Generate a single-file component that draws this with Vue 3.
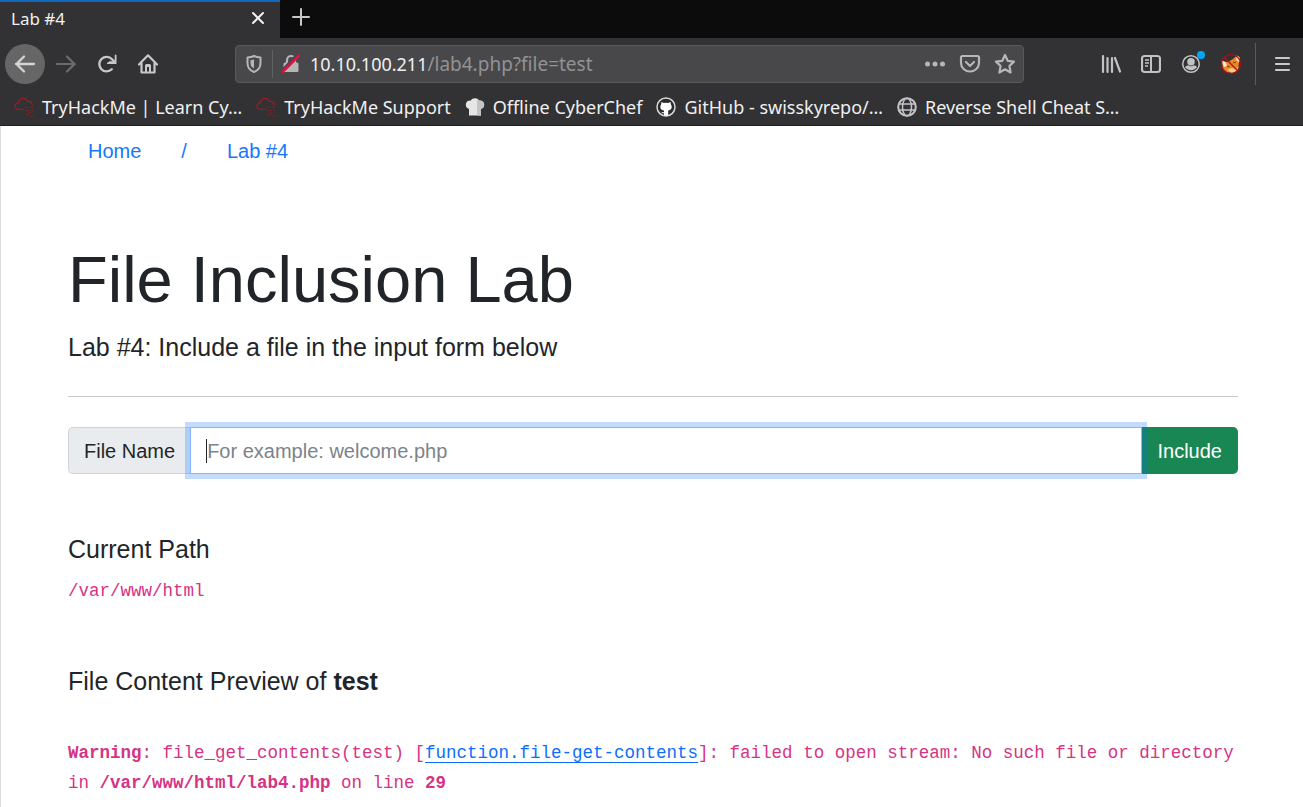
<script setup>
import { ref } from 'vue'

const fileName = ref('')
const address = ref('/lab4.php?file=test')

const bookmarks = [
  { icon: 'cloud', text: 'TryHackMe | Learn Cy…' },
  { icon: 'cloud', text: 'TryHackMe Support' },
  { icon: 'chef', text: 'Offline CyberChef' },
  { icon: 'github', text: 'GitHub - swisskyrepo/…' },
  { icon: 'globe', text: 'Reverse Shell Cheat S…' },
]
</script>

<template>
  <div class="window">
    <header class="chrome">
      <div class="tabs">
        <div class="tab">
          <span>Lab #4</span>
          <button class="icon-btn close" type="button" aria-label="Close tab">
            <svg width="20" height="20" viewBox="0 0 20 20"><path d="M5 5l10 10M15 5L5 15" stroke="#f0f0f1" stroke-width="2" fill="none" stroke-linecap="round" /></svg>
          </button>
        </div>
        <button class="icon-btn new-tab" type="button" aria-label="New tab">
          <svg width="20" height="20" viewBox="0 0 20 20"><path d="M10 2v16M2 10h16" stroke="#c8c8c9" stroke-width="2" fill="none" stroke-linecap="round" /></svg>
        </button>
      </div>

      <div class="toolbar">
        <div class="group nav">
          <button class="icon-btn back" type="button" aria-label="Back">
            <svg width="24" height="24" viewBox="0 0 24 24"><path d="M21 12H3M11 4.500L3.500 12l7.500 7.500" stroke="#d4d4d5" stroke-width="2.300" fill="none" stroke-linecap="round" stroke-linejoin="round" /></svg>
          </button>
          <button class="icon-btn" type="button" aria-label="Forward">
            <svg width="24" height="24" viewBox="0 0 24 24"><path d="M3 12h18M13 4.500L20.500 12 13 19.500" stroke="#6c6c6e" stroke-width="2.200" fill="none" stroke-linecap="round" stroke-linejoin="round" /></svg>
          </button>
          <button class="icon-btn" type="button" aria-label="Reload">
            <svg width="22" height="22" viewBox="0 0 22 22"><path d="M15.800 16.300A7.300 7.300 0 1 1 16 6.200L18 8.300" stroke="#c8c8c9" stroke-width="2.300" fill="none" stroke-linecap="round" /><path d="M19.600 2.500v7.700h-7.700M19.600 3.200v6h-6" stroke="#c8c8c9" stroke-width="1.800" fill="none" stroke-linecap="round" stroke-linejoin="round" /></svg>
          </button>
          <button class="icon-btn" type="button" aria-label="Home">
            <svg width="22" height="22" viewBox="0 0 22 22"><path d="M2 11.500L11 2.300l9 9.200M4.500 10.500v9h13v-9" stroke="#c8c8c9" stroke-width="2.200" fill="none" stroke-linecap="round" stroke-linejoin="round" /><path d="M8 19v-6.500a1.500 1.500 0 0 1 1.500-1.500h3a1.500 1.500 0 0 1 1.500 1.500V19h-2v-5h-2v5z" fill="#c8c8c9" /></svg>
          </button>
        </div>

        <div class="urlbar">
          <svg width="20" height="20" viewBox="0 0 20 20"><path d="M10 2c2 1 4 1.300 6.500 1.500V9c0 5-2.500 7.500-6.500 9-4-1.500-6.500-4-6.500-9V3.500C6 3.300 8 3 10 2z" stroke="#b6b6b8" stroke-width="2" fill="none" stroke-linejoin="round" /><path d="M10 5.500v9C7.500 13 6.500 11.500 6.500 9V6.200z" fill="#b6b6b8" /></svg>
          <span class="divider"></span>
          <svg width="20" height="20" viewBox="0 0 20 20"><path d="M6 9V6a4 4 0 0 1 8 0v3" fill="none" stroke="#b6b6b8" stroke-width="2.200" /><rect x="2.500" y="8.500" width="15" height="9.500" rx="1.500" fill="#b6b6b8" /><path d="M0 18L17 0" stroke="#48484a" stroke-width="3" /><path d="M1.800 17.800L17.800 1.800" stroke="#eb0c42" stroke-width="2.600" stroke-linecap="round" /></svg>
          <div class="address">
            <label for="address">10.10.100.211</label>
            <input id="address" v-model="address" type="text" />
          </div>
          <button class="icon-btn action" type="button" aria-label="Page actions">
            <svg width="22" height="20" viewBox="0 0 22 20" fill="#b6b6b8"><circle cx="3.500" cy="10" r="2.500" /><circle cx="11" cy="10" r="2.500" /><circle cx="18.500" cy="10" r="2.500" /></svg>
          </button>
          <button class="icon-btn action" type="button" aria-label="Save to Pocket">
            <svg width="22" height="20" viewBox="0 0 22 20" fill="none" stroke="#b6b6b8" stroke-width="2.200" stroke-linecap="round" stroke-linejoin="round"><path d="M3.500 2h15a1.500 1.500 0 0 1 1.500 1.500V9a9 8.500 0 0 1-18 0V3.500A1.500 1.500 0 0 1 3.500 2z" /><path d="M7 8l4 4 4-4" /></svg>
          </button>
          <button class="icon-btn action" type="button" aria-label="Bookmark this page">
            <svg width="22" height="22" viewBox="0 0 22 22"><path d="M11 2l2.700 5.800 6.300.8-4.600 4.400 1.200 6.500L11 16.300l-5.600 3.200L6.600 13 2 8.600l6.300-.8z" fill="none" stroke="#b6b6b8" stroke-width="2.200" stroke-linejoin="round" /></svg>
          </button>
        </div>

        <div class="group">
          <button class="icon-btn" type="button" aria-label="Library">
            <svg width="20" height="20" viewBox="0 0 20 20"><path d="M2 2v16M6.500 4v14M11 4v14M14 4l5 13.500" stroke="#c2c2c4" stroke-width="2.200" fill="none" stroke-linecap="round" /></svg>
          </button>
          <button class="icon-btn" type="button" aria-label="Sidebars">
            <svg width="20" height="20" viewBox="0 0 20 20"><rect x="1" y="2" width="18" height="16" rx="2.500" fill="none" stroke="#c2c2c4" stroke-width="2.200" /><path d="M10 2v16" stroke="#c2c2c4" stroke-width="2" /><path d="M4 6h4M4 9h4M4 12h3" stroke="#c2c2c4" stroke-width="1.300" /></svg>
          </button>
          <button class="icon-btn account" type="button" aria-label="Account">
            <svg width="20" height="20" viewBox="0 0 20 20"><circle cx="10" cy="10" r="8.300" fill="none" stroke="#c2c2c4" stroke-width="1.500" /><circle cx="10" cy="7.800" r="3.800" fill="#c2c2c4" /><path d="M4 13c1-1 2-1.500 3.200-1.700 1.700 1.300 3.900 1.300 5.600 0C14 11.500 15 12 16 13c-1.200 2-3.400 3.200-6 3.200S5.200 15 4 13z" fill="#c2c2c4" /></svg>
            <span class="badge"></span>
          </button>
          <button class="icon-btn" type="button" aria-label="FoxyProxy">
            <svg width="22" height="22" viewBox="0 0 22 22"><path d="M2 8.500l6 .5 5-3 4-3.500 2 1.500v6l-1 5-5 4.500H7L3 17z" fill="#e98a22" /><path d="M1.500 7.500l4 1.500 1.500 4-3 1zM16 2.500l3.500 1.500v5l-3-1.500z" fill="#f4ead8" /><path d="M7 17l4-2 5 1 3-3-2 5-5 2z" fill="#f5c98b" /><path d="M7 13l3 1M13 10l3-1" stroke="#8a420e" stroke-width="1.200" /><circle cx="11" cy="11" r="9.500" fill="none" stroke="#b40f12" stroke-width="1.200" /><path d="M4.300 4.300l13.400 13.400" stroke="#b40f12" stroke-width="1.300" /></svg>
          </button>
          <span class="separator"></span>
          <button class="icon-btn menu" type="button" aria-label="Open menu">
            <svg width="18" height="20" viewBox="0 0 18 20"><path d="M2 4h13M2 10h13M2 16h13" stroke="#c8c8c9" stroke-width="2.200" stroke-linecap="round" /></svg>
          </button>
        </div>
      </div>

      <nav class="bookmarks" aria-label="Bookmarks">
        <a v-for="b in bookmarks" :key="b.text" href="#" class="bookmark">
          <svg v-if="b.icon === 'cloud'" width="20" height="20" viewBox="0 0 21 21" fill="none" stroke="#9c1c20" stroke-width="1.300"><path d="M10 13H5C2.500 13 1 11.500 1 9.500S2.500 6.500 4.500 6.300C5 3.500 7 1.500 9.500 1.500c2.300 0 4 1.200 4.600 3C17 4.300 19.300 6 19.500 9" /><path d="M11 11h3.500M16 11h4M12 14h5M18.500 14h2M13 18.500h3M17.500 20h3M15 16.500h3" opacity=".6" /></svg>
          <svg v-else-if="b.icon === 'chef'" width="20" height="20" viewBox="0 0 20 20"><path d="M4 12C1 11 .5 9 1 6.500 1.500 4 4 3 6 3.500c1-3 7-3 8 0 2-.5 4.500.5 5 3S19 11 16 12v6.500H4z" fill="#e6e6e6" /><path d="M12 2l2 1.500c2-.5 4.500.5 5 3S19 11 16 12v6.500h-4z" fill="#c4c4c4" /></svg>
          <svg v-else-if="b.icon === 'github'" width="20" height="20" viewBox="0 0 20 20"><circle cx="10" cy="10" r="9" fill="#2b2b2d" stroke="#d6d6d6" stroke-width="1.500" /><path d="M5.500 5l2.200 1.100a9 9 0 0 1 4.600 0L14.500 5l.4 2.500c1.800 3 .5 5.500-2.700 6v5.200H8v-2.500c-1.500.2-2.200-.4-2.700-1.500 1 .6 1.700.6 2.700.3v-1.500c-3.300-.6-4.600-3-2.900-6z" fill="#fff" /></svg>
          <svg v-else width="20" height="20" viewBox="0 0 20 20" fill="none" stroke="#c4c4c6" stroke-width="2"><circle cx="10" cy="10" r="8.800" /><ellipse cx="10" cy="10" rx="4.500" ry="8.800" stroke-width="1.500" /><path d="M2 7h16M2 13h16" stroke-width="1.500" /></svg>
          <span>{{ b.text }}</span>
        </a>
      </nav>
    </header>

    <main class="page">
      <nav class="crumbs" aria-label="Breadcrumb">
        <a href="#">Home</a>
        <a href="#">/</a>
        <a href="#">Lab #4</a>
      </nav>

      <h1>File Inclusion Lab</h1>
      <p class="lead">Lab #4: Include a file in the input form below</p>
      <hr />

      <form class="input-group" @submit.prevent>
        <label for="file">File Name</label>
        <div class="field">
          <input id="file" v-model="fileName" type="text" placeholder="For example: welcome.php" />
          <span class="caret"></span>
        </div>
        <button type="submit">Include</button>
      </form>

      <section class="current">
        <h2>Current Path</h2>
        <code>/var/www/html</code>
      </section>

      <section class="preview">
        <h2>File Content Preview of <b>test</b></h2>
        <code><b>Warning</b>: file_get_contents(test) [<a href="#">function.file-get-contents</a>]: failed to open stream: No such file or directory in <b>/var/www/html/lab4.php</b> on line <b>29</b></code>
      </section>
    </main>
  </div>
</template>

<style>
body {
  margin: 0;
  background: #fff;
}
</style>

<style scoped>
* {
  box-sizing: border-box;
}
.window {
  min-height: 100vh;
  display: flex;
  flex-direction: column;
}
.chrome {
  background: #323234;
  border-bottom: 1px solid #202022;
  color: #f0f0f1;
  font-family: "Noto Sans", "Open Sans", sans-serif;
  font-size: 18px;
}
.icon-btn {
  display: flex;
  align-items: center;
  justify-content: center;
  width: 40px;
  height: 40px;
  padding: 0;
  border: 0;
  background: none;
}
.tabs {
  display: flex;
  height: 38px;
  background: #0c0c0d;
}
.tab {
  display: flex;
  align-items: center;
  justify-content: space-between;
  width: 280px;
  padding: 0 12px 4px 11px;
  background: #323234;
  border-top: 2px solid #1069bf;
  font-size: 17px;
}
.close {
  width: 20px;
  height: 20px;
}
.new-tab {
  height: 34px;
  width: 42px;
}
.toolbar {
  display: flex;
  align-items: center;
  gap: 67px;
  height: 51px;
  padding-left: 5px;
}
.group {
  display: flex;
  align-items: center;
}
.nav {
  gap: 1px;
}
.back {
  border-radius: 50%;
  background: #666667;
}
.urlbar {
  flex: 1;
  display: flex;
  align-items: center;
  height: 38px;
  padding: 0 1px 0 8px;
  border: 1px solid #59595b;
  border-radius: 4px;
  background: #48484a;
}
.divider {
  width: 1px;
  height: 28px;
  margin: 0 8px;
  background: #5f6266;
}
.address {
  display: flex;
  align-items: baseline;
  flex: 1;
  margin-left: 9px;
}
.address input {
  flex: 1;
  min-width: 0;
  padding: 0;
  border: 0;
  outline: 0;
  background: none;
  color: #929294;
  font: inherit;
  font-size: 19px;
}
.action {
  width: 35px;
}
.account {
  position: relative;
}
.badge {
  position: absolute;
  top: 7px;
  right: 6px;
  width: 8px;
  height: 8px;
  border-radius: 50%;
  background: #00a8f5;
}
.separator {
  width: 1px;
  height: 42px;
  margin-left: 4px;
  background: #5a5a5c;
}
.menu {
  width: 47px;
  padding-left: 6px;
}
.bookmarks {
  display: flex;
  height: 36px;
  padding-left: 14px;
  gap: 14px;
  align-items: center;
}
.bookmark {
  display: flex;
  align-items: center;
  gap: 8px;
  color: inherit;
  text-decoration: none;
  white-space: nowrap;
}
.page {
  flex: 1;
  padding: 0 65px 0 67px;
  border-left: 1px solid #dcdcdc;
  color: #212529;
  font-family: "Liberation Sans", Arial, sans-serif;
  font-size: 20px;
  line-height: 30px;
}
.crumbs {
  display: flex;
  gap: 40px;
  padding: 10px 20px;
}
.crumbs a {
  color: #1677fb;
  text-decoration: none;
}
h1 {
  margin: 65px 0 13px;
  font-size: 65px;
  font-weight: 400;
  line-height: 78px;
}
.lead {
  margin: 0;
  font-size: 25px;
}
hr {
  margin: 34px 0 30px;
  border: 0;
  border-top: 1px solid #c8c9ca;
}
.input-group {
  display: flex;
  height: 47px;
}
.input-group label {
  display: flex;
  align-items: center;
  padding: 0 15px;
  border: 1px solid #ced4da;
  border-right: 0;
  border-radius: 5px 0 0 5px;
  background: #e9ecef;
}
.field {
  position: relative;
  flex: 1;
  display: flex;
}
.field input {
  flex: 1;
  min-width: 0;
  padding: 0 16px;
  border: 1px solid #86b7fe;
  outline: 0;
  background: #fff;
  box-shadow: 0 0 0 5px rgba(13, 110, 253, 0.25);
  color: #212529;
  font: inherit;
}
.field input::placeholder {
  color: #7c838a;
  opacity: 1;
}
.caret {
  position: absolute;
  left: 16px;
  top: 12px;
  width: 1px;
  height: 24px;
  background: #212529;
}
.input-group button {
  padding: 0 16px;
  border: 0;
  border-radius: 0 5px 5px 0;
  background: #198754;
  color: #fff;
  font: inherit;
}
h2 {
  margin: 0;
  font-size: 25px;
  font-weight: 400;
  line-height: 30px;
}
code {
  display: block;
  color: #d63384;
  font-family: "Liberation Mono", "Courier New", monospace;
  font-size: 0.875em;
}
.current {
  margin-top: 60px;
}
.current code {
  margin-top: 12px;
}
.preview {
  margin-top: 60px;
}
.preview code {
  margin-top: 42px;
}
.preview a {
  color: #0d6efd;
  text-underline-offset: 4px;
}
</style>
